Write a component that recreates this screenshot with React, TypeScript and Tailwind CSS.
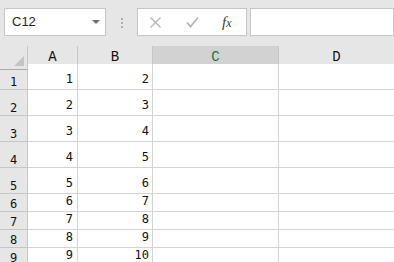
import React from 'react';

const cols = 'grid grid-cols-[28px_50px_75px_126px_1fr]';

// rows: label, value A, value B, height
const rows: [number, number, number, string][] = [
  [1, 1, 2, 'h-[26px]'],
  [2, 2, 3, 'h-[26px]'],
  [3, 3, 4, 'h-[26px]'],
  [4, 4, 5, 'h-[26px]'],
  [5, 5, 6, 'h-[26px]'],
  [6, 6, 7, 'h-[18px]'],
  [7, 7, 8, 'h-[18px]'],
  [8, 8, 9, 'h-[18px]'],
  [9, 9, 10, 'h-[18px]'],
];

const cellFont = { fontFamily: '"DejaVu Sans Mono", monospace' };
const headFont = { fontFamily: '"Liberation Mono", "Courier New", monospace' };

const NameBox = () => (
  <div className="w-[102px] h-[28px] bg-white border border-[#c6c6c6] flex items-center justify-between pl-[7px] pr-[5px]">
    <span className="text-[13px] text-[#262626]" style={{ fontFamily: '"Liberation Sans", Arial, sans-serif' }}>
      C12
    </span>
    <svg width="8" height="5" viewBox="0 0 8 5">
      <path d="M0 0 L8 0 L4 4 Z" fill="#707070" />
    </svg>
  </div>
);

const FxBox = () => (
  <div className="w-[110px] h-[28px] bg-white border border-[#c6c6c6] flex items-center pl-[11px]">
    <svg width="13" height="13" viewBox="0 0 13 13" className="mr-[24px]">
      <path d="M1.5 1.5 L11.5 11.5 M11.5 1.5 L1.5 11.5" stroke="#b5b5b5" strokeWidth="1.4" fill="none" />
    </svg>
    <svg width="13" height="12" viewBox="0 0 13 12" className="mr-[23px]">
      <path d="M1 6.5 L4.5 10.5 L12 1.5" stroke="#b5b5b5" strokeWidth="1.8" fill="none" />
    </svg>
    <span className="italic text-[15px] leading-none text-[#3c3c3c]" style={{ fontFamily: '"Liberation Serif", serif' }}>
      f<span className="text-[12px]">x</span>
    </span>
  </div>
);

export default function App() {
  return (
    <div className="w-[394px] h-[262px] overflow-hidden bg-[#e6e6e6]">
      {/* formula bar */}
      <div className="h-[46px] flex items-start pt-[8px] pl-[4px]">
        <NameBox />
        <div className="w-[31px] flex flex-col items-center gap-[2px] pt-[10px]">
          <div className="w-[2px] h-[2px] bg-[#b0b0b0]" />
          <div className="w-[2px] h-[2px] bg-[#b0b0b0]" />
          <div className="w-[2px] h-[2px] bg-[#b0b0b0]" />
        </div>
        <FxBox />
        <div className="ml-[3px] w-[144px] h-[28px] bg-white border border-[#c6c6c6]" />
      </div>

      {/* column headers */}
      <div className={`${cols} h-[18px] text-[14px] text-[#111]`} style={headFont}>
        <div className="border-r border-[#c6c6c6] border-b border-b-[#ababab] relative">
          <svg width="10" height="10" viewBox="0 0 10 10" className="absolute right-[3px] bottom-[3px]">
            <path d="M10 0 L10 10 L0 10 Z" fill="#c4c4c4" />
          </svg>
        </div>
        <div className="border-r border-[#c6c6c6] border-b border-b-[#ababab] flex items-center justify-center">A</div>
        <div className="border-r border-[#c6c6c6] border-b border-b-[#ababab] flex items-center justify-center">B</div>
        <div className="bg-[#d2d2d2] border-r border-[#c6c6c6] border-b-2 border-b-[#217346] flex items-center justify-center text-[#217346] pt-[1px]">
          C
        </div>
        <div className="border-b border-b-[#ababab] flex items-center justify-center">D</div>
      </div>

      {/* rows */}
      {rows.map(([n, a, b, h]) => (
        <div key={n} className={`${cols} ${h} text-[12px] text-[#111]`} style={cellFont}>
          <div className="bg-[#e6e6e6] border-r border-b border-[#c6c6c6] flex items-end justify-center pb-[1px] leading-[12px]">
            {n}
          </div>
          <div className="bg-white border-r border-b border-[#d4d4d4] flex items-end justify-end pr-[4px] pb-[4px] leading-[12px]">
            {a}
          </div>
          <div className="bg-white border-r border-b border-[#d4d4d4] flex items-end justify-end pr-[3px] pb-[4px] leading-[12px]">
            {b}
          </div>
          <div className="bg-white border-r border-b border-[#d4d4d4]" />
          <div className="bg-white border-b border-[#d4d4d4]" />
        </div>
      ))}
    </div>
  );
}
